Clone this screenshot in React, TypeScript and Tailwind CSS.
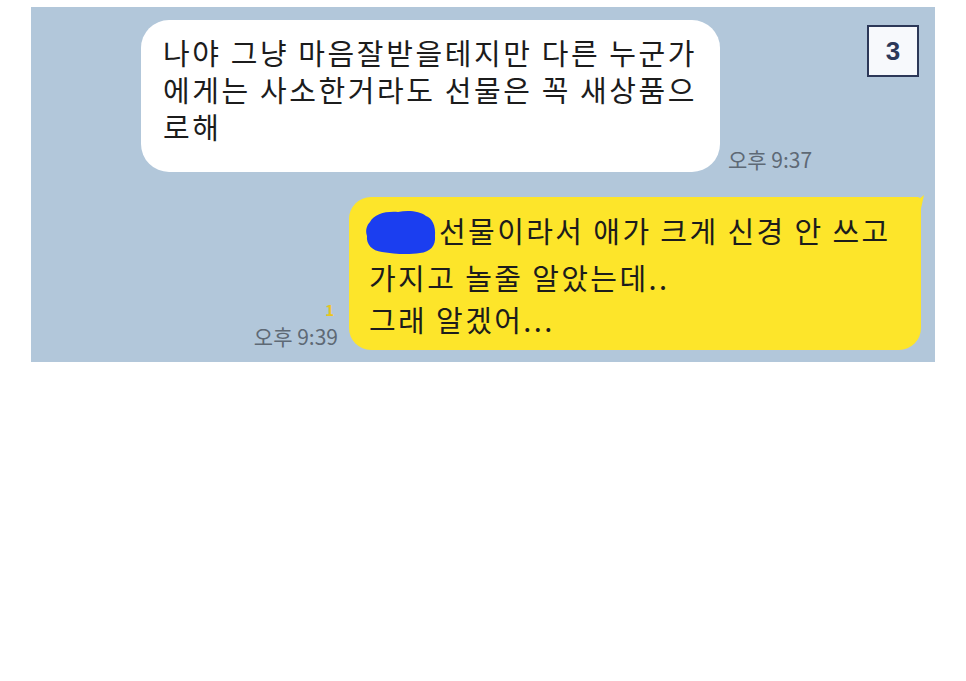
const font = "font-['Noto_Sans_CJK_KR','Noto_Sans',sans-serif]";

function Blob() {
  return (
    <svg width="74" height="48" viewBox="0 0 74 48" className="inline-block align-middle -mt-[6px] mr-[1px] -ml-[5px]">
      <path
        d="M6 14 C10 6 22 3 34 4 C44 2 56 3 62 8 C68 10 72 18 71 28 C72 38 66 44 56 45 C44 47 30 46 18 44 C8 43 2 36 3 28 C1 22 3 17 6 14 Z"
        fill="#1b3ef0"
      />
    </svg>
  );
}

export default function App() {
  return (
    <div className={`min-h-[681px] bg-white pl-[31px] pt-[7px] ${font}`}>
      <div className="w-[904px] h-[355px] bg-[#b2c7da] flex flex-col">
        {/* received */}
        <div className="flex items-start pt-[13px]">
          <div className="ml-[110px] w-[579px] h-[152px] bg-white rounded-[28px] pl-[22px] pt-[14px] text-[29px] leading-[37px] tracking-[2.6px] text-[#1c1c1c] whitespace-nowrap">
            나야 그냥 마음잘받을테지만 다른 누군가
            <br />
            에게는 사소한거라도 선물은 꼭 새상품으
            <br />
            로해
          </div>
          <div className="self-end ml-[8px] text-[21px] leading-[24px] text-[#5e6975] mb-[1px]">
            오후 9:37
          </div>
          <div className="ml-auto mr-[16px] mt-[5px] w-[52px] h-[52px] bg-[#f7f9fc] border-2 border-[#2c3858] flex items-center justify-center">
            <span className="font-['Liberation_Sans',sans-serif] font-bold text-[26px] text-[#2c3858]">3</span>
          </div>
        </div>

        {/* sent */}
        <div className="flex justify-end items-end mt-[25px] pr-[14px]">
          <div className="flex flex-col items-end mr-[11px] mb-[2px]">
            <span className="text-[15px] leading-[16px] text-[#e8c51c] font-bold mr-[4px]">1</span>
            <span className="text-[21px] leading-[24px] text-[#5e6975] mt-[6px]">오후 9:39</span>
          </div>
          <div className="relative w-[572px] h-[153px] bg-[#fde52a] rounded-[22px] rounded-tr-[4px] pl-[20px] pt-[12px] text-[29px] leading-[42px] tracking-[2.4px] text-[#1c1c1c] whitespace-nowrap">
            <Blob />
            선물이라서 애가 크게 신경 안 쓰고
            <br />
            가지고 놀줄 알았는데..
            <br />
            그래 알겠어...
            <svg width="24" height="18" viewBox="0 0 24 18" className="absolute -top-[2px] -right-[3px]">
              <path d="M0 2 L8 2 L14 8 L24 0 L20 18 L0 18 Z" fill="#fde52a" />
            </svg>
          </div>
        </div>
      </div>
    </div>
  );
}
